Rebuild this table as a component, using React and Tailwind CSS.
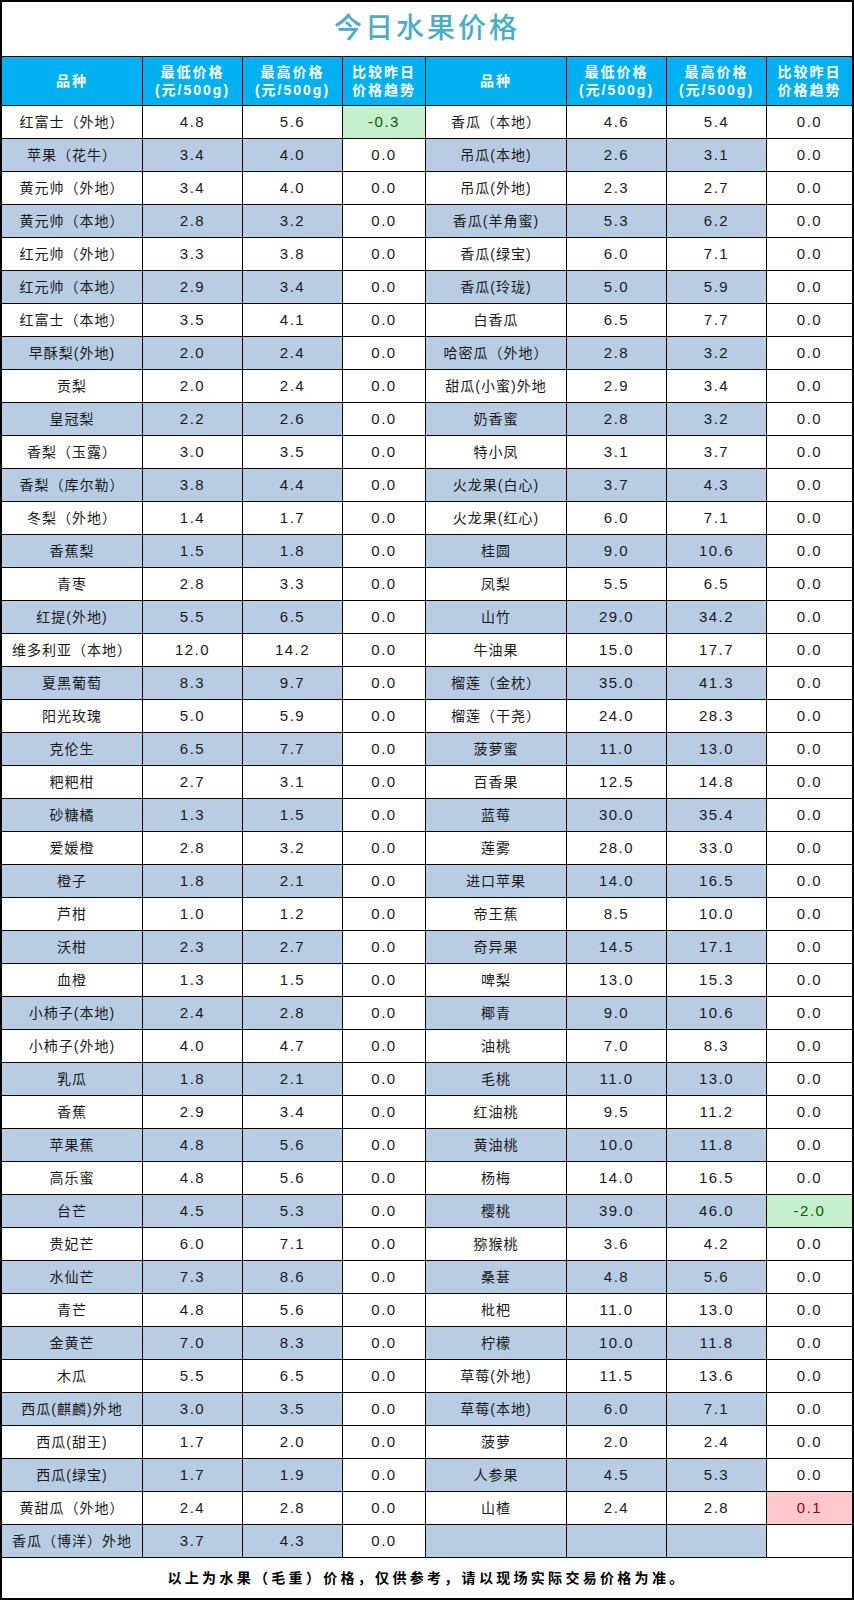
import React from 'react'

const left = [
  ['红富士（外地）', '4.8', '5.6', '-0.3', 'down'],
  ['苹果（花牛）', '3.4', '4.0', '0.0'],
  ['黄元帅（外地）', '3.4', '4.0', '0.0'],
  ['黄元帅（本地）', '2.8', '3.2', '0.0'],
  ['红元帅（外地）', '3.3', '3.8', '0.0'],
  ['红元帅（本地）', '2.9', '3.4', '0.0'],
  ['红富士（本地）', '3.5', '4.1', '0.0'],
  ['早酥梨(外地)', '2.0', '2.4', '0.0'],
  ['贡梨', '2.0', '2.4', '0.0'],
  ['皇冠梨', '2.2', '2.6', '0.0'],
  ['香梨（玉露）', '3.0', '3.5', '0.0'],
  ['香梨（库尔勒）', '3.8', '4.4', '0.0'],
  ['冬梨（外地）', '1.4', '1.7', '0.0'],
  ['香蕉梨', '1.5', '1.8', '0.0'],
  ['青枣', '2.8', '3.3', '0.0'],
  ['红提(外地)', '5.5', '6.5', '0.0'],
  ['维多利亚（本地）', '12.0', '14.2', '0.0'],
  ['夏黑葡萄', '8.3', '9.7', '0.0'],
  ['阳光玫瑰', '5.0', '5.9', '0.0'],
  ['克伦生', '6.5', '7.7', '0.0'],
  ['粑粑柑', '2.7', '3.1', '0.0'],
  ['砂糖橘', '1.3', '1.5', '0.0'],
  ['爱媛橙', '2.8', '3.2', '0.0'],
  ['橙子', '1.8', '2.1', '0.0'],
  ['芦柑', '1.0', '1.2', '0.0'],
  ['沃柑', '2.3', '2.7', '0.0'],
  ['血橙', '1.3', '1.5', '0.0'],
  ['小柿子(本地)', '2.4', '2.8', '0.0'],
  ['小柿子(外地)', '4.0', '4.7', '0.0'],
  ['乳瓜', '1.8', '2.1', '0.0'],
  ['香蕉', '2.9', '3.4', '0.0'],
  ['苹果蕉', '4.8', '5.6', '0.0'],
  ['高乐蜜', '4.8', '5.6', '0.0'],
  ['台芒', '4.5', '5.3', '0.0'],
  ['贵妃芒', '6.0', '7.1', '0.0'],
  ['水仙芒', '7.3', '8.6', '0.0'],
  ['青芒', '4.8', '5.6', '0.0'],
  ['金黄芒', '7.0', '8.3', '0.0'],
  ['木瓜', '5.5', '6.5', '0.0'],
  ['西瓜(麒麟)外地', '3.0', '3.5', '0.0'],
  ['西瓜(甜王)', '1.7', '2.0', '0.0'],
  ['西瓜(绿宝)', '1.7', '1.9', '0.0'],
  ['黄甜瓜（外地）', '2.4', '2.8', '0.0'],
  ['香瓜（博洋）外地', '3.7', '4.3', '0.0'],
]

const right = [
  ['香瓜（本地）', '4.6', '5.4', '0.0'],
  ['吊瓜(本地)', '2.6', '3.1', '0.0'],
  ['吊瓜(外地)', '2.3', '2.7', '0.0'],
  ['香瓜(羊角蜜)', '5.3', '6.2', '0.0'],
  ['香瓜(绿宝)', '6.0', '7.1', '0.0'],
  ['香瓜(玲珑)', '5.0', '5.9', '0.0'],
  ['白香瓜', '6.5', '7.7', '0.0'],
  ['哈密瓜（外地）', '2.8', '3.2', '0.0'],
  ['甜瓜(小蜜)外地', '2.9', '3.4', '0.0'],
  ['奶香蜜', '2.8', '3.2', '0.0'],
  ['特小凤', '3.1', '3.7', '0.0'],
  ['火龙果(白心)', '3.7', '4.3', '0.0'],
  ['火龙果(红心)', '6.0', '7.1', '0.0'],
  ['桂圆', '9.0', '10.6', '0.0'],
  ['凤梨', '5.5', '6.5', '0.0'],
  ['山竹', '29.0', '34.2', '0.0'],
  ['牛油果', '15.0', '17.7', '0.0'],
  ['榴莲（金枕）', '35.0', '41.3', '0.0'],
  ['榴莲（干尧）', '24.0', '28.3', '0.0'],
  ['菠萝蜜', '11.0', '13.0', '0.0'],
  ['百香果', '12.5', '14.8', '0.0'],
  ['蓝莓', '30.0', '35.4', '0.0'],
  ['莲雾', '28.0', '33.0', '0.0'],
  ['进口苹果', '14.0', '16.5', '0.0'],
  ['帝王蕉', '8.5', '10.0', '0.0'],
  ['奇异果', '14.5', '17.1', '0.0'],
  ['啤梨', '13.0', '15.3', '0.0'],
  ['椰青', '9.0', '10.6', '0.0'],
  ['油桃', '7.0', '8.3', '0.0'],
  ['毛桃', '11.0', '13.0', '0.0'],
  ['红油桃', '9.5', '11.2', '0.0'],
  ['黄油桃', '10.0', '11.8', '0.0'],
  ['杨梅', '14.0', '16.5', '0.0'],
  ['樱桃', '39.0', '46.0', '-2.0', 'down'],
  ['猕猴桃', '3.6', '4.2', '0.0'],
  ['桑葚', '4.8', '5.6', '0.0'],
  ['枇杷', '11.0', '13.0', '0.0'],
  ['柠檬', '10.0', '11.8', '0.0'],
  ['草莓(外地)', '11.5', '13.6', '0.0'],
  ['草莓(本地)', '6.0', '7.1', '0.0'],
  ['菠萝', '2.0', '2.4', '0.0'],
  ['人参果', '4.5', '5.3', '0.0'],
  ['山楂', '2.4', '2.8', '0.1', 'up'],
  ['', '', '', ''],
]

const font = { fontFamily: '"Liberation Sans", "Noto Sans CJK SC", sans-serif' }

function trendClass(kind) {
  if (kind === 'down') return 'bg-[#c6efce] text-[#006100]'
  if (kind === 'up') return 'bg-[#ffc7ce] text-[#9c0006]'
  return 'bg-white text-[#1a1a1a]'
}

function Half({ row, shaded, last }) {
  const [name, low, high, diff, kind] = row
  const bg = shaded ? 'bg-[#b8cce4]' : 'bg-white'
  return (
    <>
      <div className={`w-[141px] shrink-0 border-r border-black flex items-center justify-center text-[14px] tracking-[1px] whitespace-nowrap ${bg}`}>
        {name}
      </div>
      <div className={`w-[100px] shrink-0 border-r border-black flex items-center justify-center text-[15px] tracking-[1.5px] ${bg}`}>
        {low}
      </div>
      <div className={`w-[100px] shrink-0 border-r border-black flex items-center justify-center text-[15px] tracking-[1.5px] ${bg}`}>
        {high}
      </div>
      <div className={`${last ? 'flex-1' : 'w-[83px] border-r border-black'} shrink-0 flex items-center justify-center text-[15px] tracking-[1.5px] ${trendClass(kind)}`}>
        {diff}
      </div>
    </>
  )
}

function HeaderHalf({ last }) {
  return (
    <>
      <div className="w-[141px] shrink-0 border-r border-black flex items-center justify-center">品种</div>
      <div className="w-[100px] shrink-0 border-r border-black flex flex-col items-center justify-center">
        <span>最低价格</span>
        <span>(元/500g)</span>
      </div>
      <div className="w-[100px] shrink-0 border-r border-black flex flex-col items-center justify-center">
        <span>最高价格</span>
        <span>(元/500g)</span>
      </div>
      <div className={`${last ? 'flex-1' : 'w-[83px] border-r border-black'} shrink-0 flex flex-col items-center justify-center`}>
        <span>比较昨日</span>
        <span>价格趋势</span>
      </div>
    </>
  )
}

export default function App() {
  return (
    <div className="w-[854px] h-[1600px] bg-white border-2 border-black text-[#1a1a1a]" style={font}>
      <div className="h-[55px] border-b border-black flex items-center justify-center text-[28px] font-medium tracking-[3px] text-[#4bacc6]">
        今日水果价格
      </div>
      <div className="h-[49px] border-b border-black flex bg-[#00b0f0] text-white font-bold text-[14px] leading-[18px] tracking-[2px]">
        <HeaderHalf />
        <HeaderHalf last />
      </div>
      {left.map((row, i) => (
        <div key={i} className="h-[33px] border-b border-black flex">
          <Half row={row} shaded={i % 2 === 1} />
          <Half row={right[i]} shaded={i % 2 === 1} last />
        </div>
      ))}
      <div className="h-[40px] flex items-center justify-center text-[14px] font-bold tracking-[3.3px] text-black">
        以上为水果（毛重）价格，仅供参考，请以现场实际交易价格为准。
      </div>
    </div>
  )
}
